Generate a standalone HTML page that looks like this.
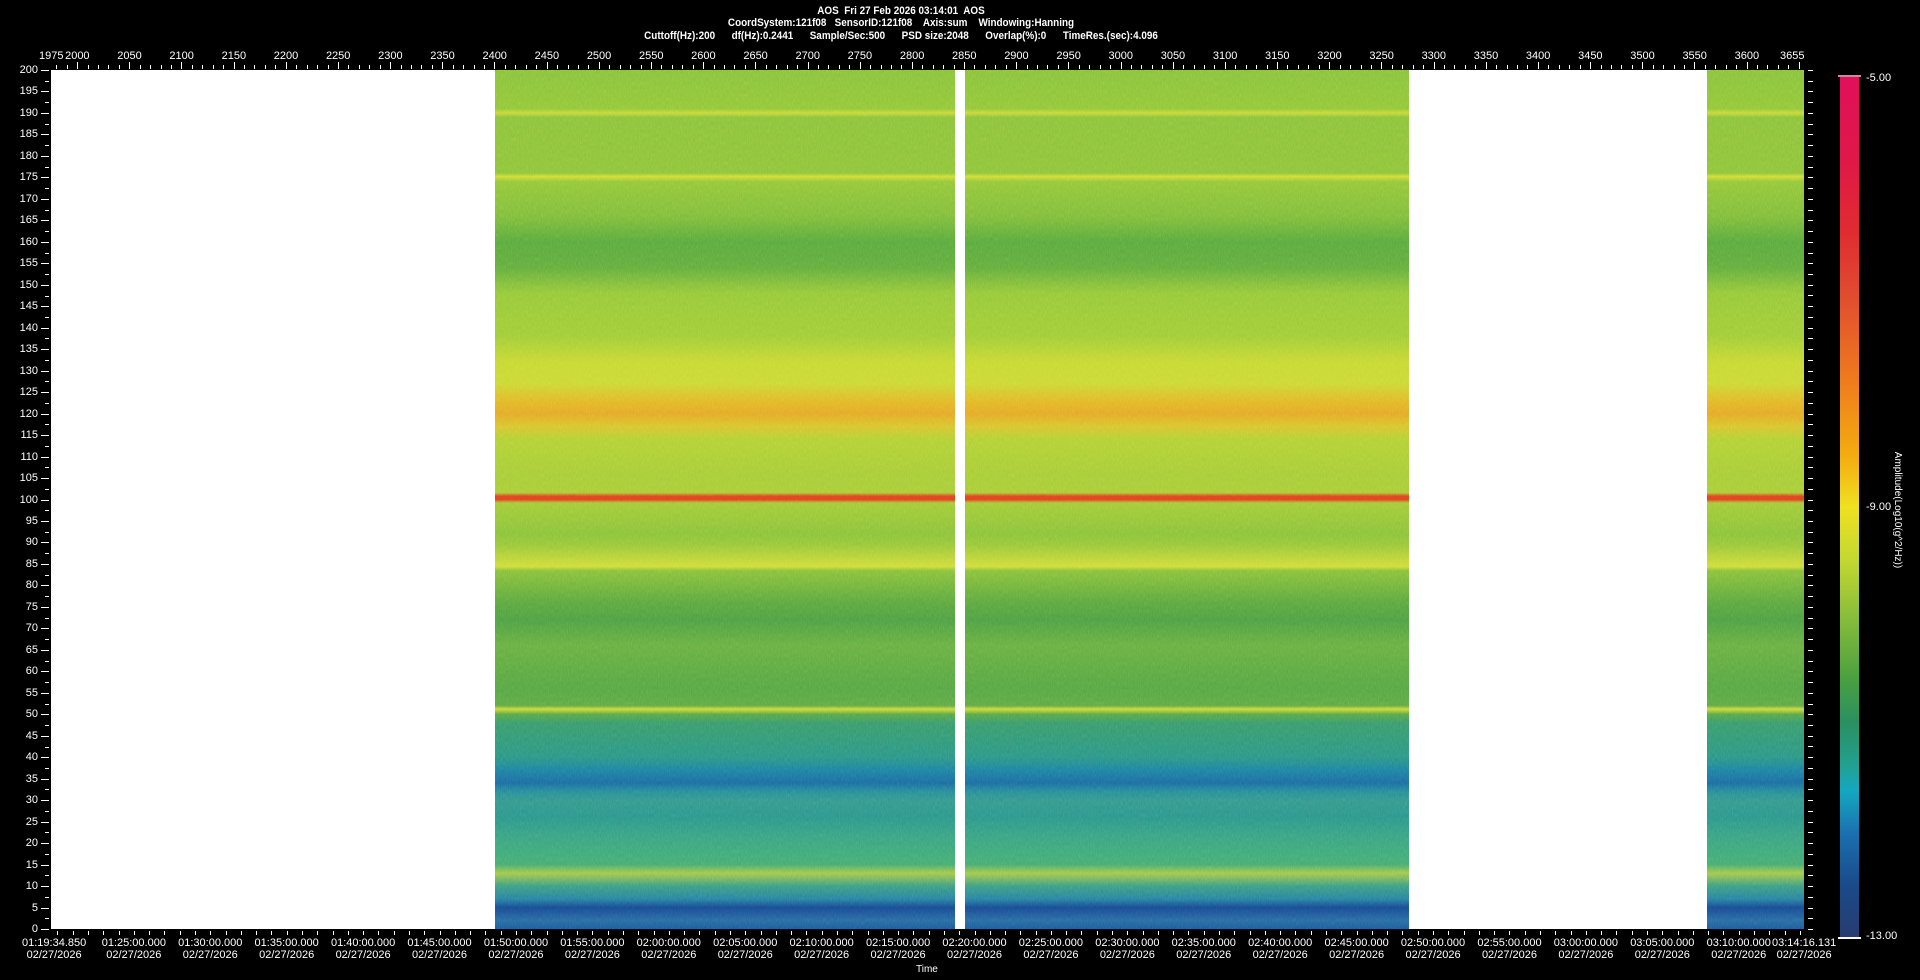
<!DOCTYPE html>
<html><head><meta charset="utf-8"><style>
html,body{margin:0;padding:0;background:#000;width:1920px;height:980px;overflow:hidden;font-family:"Liberation Sans",sans-serif;color:#fff}
#root{position:relative;width:1920px;height:980px;background:#000}
.t{position:absolute;white-space:nowrap;font-size:11px;line-height:12px}
.title{position:absolute;left:0;width:1802px;text-align:center;font-weight:bold;font-size:11px;transform:scaleX(0.9)}
#plot{position:absolute;left:51px;top:70px;width:1753px;height:859px;background:#fff}
.sp{position:absolute;top:0;height:859px;overflow:hidden;
background:
linear-gradient(to bottom,
#86c23c 0%,#90c63a 4.5%,#c8d83a 5%,#8ac23c 5.5%,#8cc43a 12%,#d2dc3a 12.4%,#92c63a 13%,#7ebc3c 17%,#5aa83e 20%,#62ac3e 23%,#94c83a 26%,#a0cc38 31%,#c6d834 34%,#cad836 36.5%,#e2b82a 38.5%,#e4a828 40%,#d8c430 41.5%,#b2d036 43%,#a6cc38 47%,#a8cc38 49.2%,#e24422 49.6%,#e04020 50%,#a2ca38 50.4%,#88c23c 54%,#96c63a 55.2%,#d0dc3a 57.8%,#86c03c 58.3%,#5ca640 62%,#4e9e44 64%,#68ae42 67%,#56a444 72%,#60a846 74%,#cada3a 74.4%,#5aa646 75%,#3a9a6a 76%,#2e9482 80%,#2080a0 81.5%,#1e6aa0 83%,#2a8a98 84%,#36968a 85%,#2e9488 87%,#3aa080 89%,#40a878 91%,#48aa70 92.5%,#a0c84a 93.5%,#3e9c80 95%,#2a80a0 96.5%,#1a4a90 97.5%,#2a6aa0 99%,#1e5a98 100%);}
.sp svg{position:absolute;left:0;top:0;width:100%;height:100%;mix-blend-mode:overlay;opacity:.35}
#cbar{position:absolute;left:1840px;top:77px;width:19px;height:860px;background:linear-gradient(to bottom,#e0105a 0%,#e01848 10%,#e02c30 18%,#e04a30 25%,#ee7a1e 35%,#f4ac10 44%,#f0e020 50%,#c4d830 56%,#90c03a 62%,#4aa040 70%,#2a9060 75%,#22a090 80%,#14a8c0 83%,#1a70b0 88%,#1a4a8a 94%,#283c70 100%)}
</style></head><body><div id="root">
<svg width="0" height="0" style="position:absolute"><filter id="nz"><feTurbulence type="fractalNoise" baseFrequency="0.9 0.25" numOctaves="2" seed="3"/><feColorMatrix type="saturate" values="0"/></filter></svg>
<div class="title" style="top:5px">AOS&nbsp; Fri 27 Feb 2026 03:14:01&nbsp; AOS</div>
<div class="title" style="top:17px">CoordSystem:121f08&nbsp;&nbsp; SensorID:121f08&nbsp;&nbsp;&nbsp; Axis:sum&nbsp;&nbsp;&nbsp; Windowing:Hanning</div>
<div class="title" style="top:30px">Cuttoff(Hz):200&nbsp;&nbsp;&nbsp;&nbsp;&nbsp; df(Hz):0.2441&nbsp;&nbsp;&nbsp;&nbsp;&nbsp; Sample/Sec:500&nbsp;&nbsp;&nbsp;&nbsp;&nbsp; PSD size:2048&nbsp;&nbsp;&nbsp;&nbsp;&nbsp; Overlap(%):0&nbsp;&nbsp;&nbsp;&nbsp;&nbsp; TimeRes.(sec):4.096</div>
<div id="plot">
<div class="sp" style="left:444px;width:460px"><svg><rect width="100%" height="100%" filter="url(#nz)"/></svg></div>
<div class="sp" style="left:914px;width:444px"><svg><rect width="100%" height="100%" filter="url(#nz)"/></svg></div>
<div class="sp" style="left:1656px;width:97px"><svg><rect width="100%" height="100%" filter="url(#nz)"/></svg></div>
</div>
<div id="cbar"></div>
<div style="position:absolute;left:1838px;top:75px;width:23px;height:2px;background:#e87aa0"></div>
<div style="position:absolute;left:1838px;top:937px;width:23px;height:2px;background:#fff"></div>
<div class="t" style="left:1866px;top:72px">-5.00</div>
<div class="t" style="left:1866px;top:501px">-9.00</div>
<div class="t" style="left:1866px;top:930px">-13.00</div>
<div class="t" style="left:1897px;top:510px;transform:translate(-50%,-50%) rotate(90deg);font-size:10px">Amplitude(Log10(g^2/Hz))</div>
<div class="t" style="left:916px;top:964px;font-size:10px">Time</div>
<div id="ax"></div>
</div>
<script>
var ax=document.getElementById('ax'),h='';
function d(s){h+=s}
for(var f=0;f<=200;f+=5){var y=929-f*4.295;
d('<div class="t" style="left:0;width:38px;text-align:right;top:'+(y-6)+'px">'+f+'</div>');
d('<div style="position:absolute;left:41px;top:'+y+'px;width:8px;height:1px;background:#fff"></div>');
if(f<200)d('<div style="position:absolute;left:45px;top:'+(y-10.7)+'px;width:4px;height:1px;background:#fff"></div>');}
for(var f=0;f<=200;f+=2.5){var y=929-f*4.295;d('<div style="position:absolute;left:1808px;top:'+y+'px;width:5px;height:1px;background:#fff"></div>');}
function xu(u){return 51+(u-1975)*1753/1680}
d('<div class="t" style="left:'+(xu(1975)-12)+'px;top:50px">1975</div>');
for(var u=2000;u<=3600;u+=50){d('<div class="t" style="left:'+(xu(u)-12)+'px;top:50px">'+u+'</div>');}
d('<div class="t" style="left:'+(1804-24)+'px;top:50px">3655</div>');
for(var u=1980;u<=3655;u+=10){var x=xu(u);d('<div style="position:absolute;left:'+x+'px;top:'+(u%50==0?62:65)+'px;width:1px;height:'+(u%50==0?7:4)+'px;background:#fff"></div>');}
var ps=1753/6881.281;
d('<div class="t" style="left:22px;top:937px;text-align:center">01:19:34.850<br>02/27/2026</div>');
for(var m=0;m<=21;m++){var s=325.15+m*300;var x=51+s*ps;var tm=85+m*5;var hh=Math.floor(tm/60),mm=tm%60;
var lab=('0'+hh).slice(-2)+':'+('0'+mm).slice(-2)+':00.000';
d('<div class="t" style="left:'+(x-34)+'px;width:68px;top:937px;text-align:center">'+lab+'<br>02/27/2026</div>');}
for(var s=0;s<6881;s+=60){var x=51+(s+25.15)*ps;var big=((s+25.15+325.15)%300)<1;d('<div style="position:absolute;left:'+x+'px;top:931px;width:1px;height:'+(big?6:4)+'px;background:#fff"></div>');}
d('<div class="t" style="left:1772px;top:937px;text-align:center">03:14:16.131<br>02/27/2026</div>');
ax.innerHTML=h;
</script>
</body></html>
